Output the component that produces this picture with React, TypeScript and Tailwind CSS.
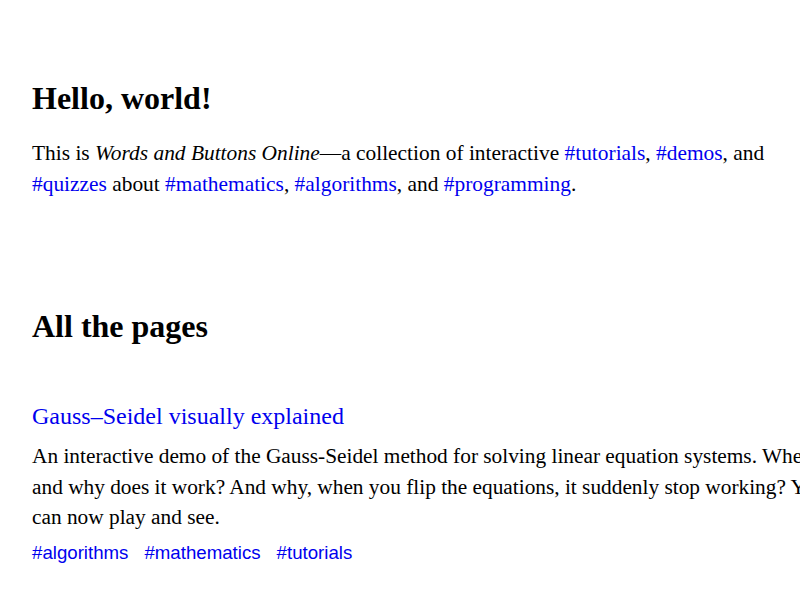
import React from "react";

const serif = { fontFamily: '"Liberation Serif", "Times New Roman", serif' };

export default function App() {
  return (
    <div className="w-[800px] h-[600px] overflow-hidden bg-white text-black" style={serif}>
      <div className="pl-[32px] pt-[78px]">
        <h1 className="text-[32px] leading-[40px] font-bold m-0">Hello, world!</h1>
        <p className="mt-[20px] w-[740px] text-[21.4px] leading-[31px]">
          This is <i>Words and Buttons Online</i>—a collection of interactive{" "}
          <a className="text-[#0000ee] no-underline">#tutorials</a>,{" "}
          <a className="text-[#0000ee] no-underline">#demos</a>, and{" "}
          <a className="text-[#0000ee] no-underline">#quizzes</a> about{" "}
          <a className="text-[#0000ee] no-underline">#mathematics</a>,{" "}
          <a className="text-[#0000ee] no-underline">#algorithms</a>, and{" "}
          <a className="text-[#0000ee] no-underline">#programming</a>.
        </p>
        <h2 className="mt-[106px] text-[32px] leading-[40px] font-bold">All the pages</h2>
        <div className="mt-[55px]">
          <a className="block text-[24px] leading-[30px] text-[#0000ee] no-underline">
            Gauss–Seidel visually explained
          </a>
          <p className="mt-[10px] text-[21.33px] leading-[30.5px] whitespace-nowrap">
            An interactive demo of the Gauss-Seidel method for solving linear equation systems. When does it converge,
            <br />
            and why does it work? And why, when you flip the equations, it suddenly stop working? You
            <br />
            can now play and see.
          </p>
          <div
            className="mt-[8px] flex gap-[16px] text-[18.67px] leading-[24px] text-[#0000ee]"
            style={{ fontFamily: '"Liberation Sans", Arial, sans-serif' }}
          >
            <a>#algorithms</a>
            <a>#mathematics</a>
            <a>#tutorials</a>
          </div>
        </div>
      </div>
    </div>
  );
}
